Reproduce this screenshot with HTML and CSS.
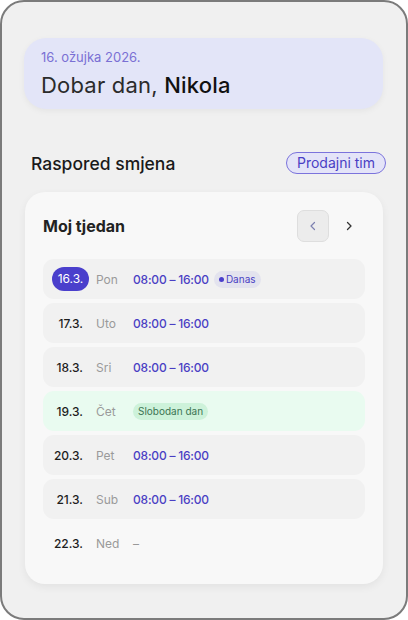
FILE: index.html
```html
<!doctype html>
<html lang="hr">

<head>
  <meta charset="UTF-8">
  <title>Raspored smjena</title>
  <link rel="stylesheet" href="styles.css">
</head>

<body>
  <div class="frame">
    <!-- Greeting -->
    <div class="greeting">
      <div class="greeting-date">16. ožujka 2026.</div>
      <div class="greeting-hello">Dobar dan, <span class="name">Nikola</span></div>
    </div>

    <!-- Section header -->
    <div class="section-head">
      <h2 class="section-title">Raspored smjena</h2>
      <span class="team">Prodajni tim</span>
    </div>

    <!-- Week card -->
    <div class="week">
      <div class="week-head">
        <h3 class="week-title">Moj tjedan</h3>
        <div class="week-nav">
          <button class="nav-btn active" aria-label="Prethodni tjedan">
            <svg width="12" height="12" viewBox="0 0 12 12"><path d="M7.5 2.5 4 6l3.5 3.5" fill="none" stroke="#7d80b0" stroke-width="1.2" stroke-linecap="round" stroke-linejoin="round"/></svg>
          </button>
          <button class="nav-btn" aria-label="Sljedeći tjedan">
            <svg width="12" height="12" viewBox="0 0 12 12"><path d="M4.5 2.5 8 6l-3.5 3.5" fill="none" stroke="#333" stroke-width="1.3" stroke-linecap="round" stroke-linejoin="round"/></svg>
          </button>
        </div>
      </div>

      <div class="days">
        <div class="day">
          <span class="day-date today">16.3.</span>
          <span class="day-name">Pon</span>
          <span class="day-time">08:00 – 16:00</span>
          <span class="tag tag-today"><i class="dot"></i>Danas</span>
        </div>
        <div class="day">
          <span class="day-date">17.3.</span>
          <span class="day-name">Uto</span>
          <span class="day-time">08:00 – 16:00</span>
        </div>
        <div class="day">
          <span class="day-date">18.3.</span>
          <span class="day-name">Sri</span>
          <span class="day-time">08:00 – 16:00</span>
        </div>
        <div class="day day-off">
          <span class="day-date">19.3.</span>
          <span class="day-name">Čet</span>
          <span class="tag tag-off">Slobodan dan</span>
        </div>
        <div class="day">
          <span class="day-date">20.3.</span>
          <span class="day-name">Pet</span>
          <span class="day-time">08:00 – 16:00</span>
        </div>
        <div class="day">
          <span class="day-date">21.3.</span>
          <span class="day-name">Sub</span>
          <span class="day-time">08:00 – 16:00</span>
        </div>
        <div class="day day-empty">
          <span class="day-date">22.3.</span>
          <span class="day-name">Ned</span>
          <span class="day-none">–</span>
        </div>
      </div>
    </div>
  </div>
</body>

</html>
```

FILE: styles.css
```css
html,
body {
  margin: 0;
  background: #fff;
}

body {
  font-family: Inter, "Noto Sans", sans-serif;
  color: #222;
}

.frame {
  box-sizing: border-box;
  width: 408px;
  height: 620px;
  border: 2px solid #7b7b7b;
  border-radius: 24px;
  background: #f0f0f0;
  padding: 36px 23px 0 22px;
}

/* Greeting */

.greeting {
  background: #e3e5f8;
  border-radius: 22px;
  padding: 11px 17px 10px;
  box-shadow: 0 2px 6px rgba(0, 0, 0, 0.05);
}

.greeting-date {
  font-size: 13px;
  line-height: 17px;
  color: #7a70d4;
}

.greeting-hello {
  margin-top: 5px;
  font-size: 22px;
  line-height: 28px;
  letter-spacing: 0.2px;
  color: #2b2b2b;
}

.greeting-hello .name {
  color: #111;
  font-weight: 500;
}

/* Section header */

.section-head {
  display: flex;
  align-items: center;
  justify-content: space-between;
  margin: 43px -3px 18px 7px;
  height: 22px;
}

.section-title {
  margin: 0;
  font-size: 17.5px;
  font-weight: 500;
  color: #1a1a1a;
}

.team {
  border: 1px solid #7b73dc;
  background: #e4e4f8;
  color: #4a3fc4;
  font-size: 14px;
  line-height: 20px;
  padding: 0 10px;
  border-radius: 11px;
}

/* Week card */

.week {
  background: #f8f8f8;
  border-radius: 20px;
  padding: 18px 18px 21px;
  margin-left: 1px;
  box-shadow: 0 3px 8px rgba(0, 0, 0, 0.06);
}

.week-head {
  display: flex;
  align-items: center;
  justify-content: space-between;
  margin-bottom: 17px;
}

.week-title {
  margin: 0;
  font-size: 16px;
  font-weight: 700;
  color: #222;
}

.week-nav {
  display: flex;
  gap: 4px;
}

.nav-btn {
  width: 32px;
  height: 32px;
  display: flex;
  align-items: center;
  justify-content: center;
  border: 1px solid transparent;
  border-radius: 7px;
  background: none;
  padding: 0;
}

.nav-btn.active {
  background: #ececec;
  border-color: #dedede;
}

.days {
  display: flex;
  flex-direction: column;
  gap: 4px;
}

.day {
  display: flex;
  align-items: center;
  height: 40px;
  padding-left: 9px;
  background: #f1f1f1;
  border-radius: 11px;
  font-size: 12px;
}

.day-off {
  background: #e9fbf0;
}

.day-empty {
  background: none;
}

.day-date {
  box-sizing: border-box;
  width: 37px;
  padding-right: 6px;
  text-align: right;
  font-weight: 500;
  color: #1e1e1e;
}

.day-date.today {
  background: #4a3fcc;
  color: #fff;
  height: 24px;
  line-height: 24px;
  border-radius: 12px;
  padding: 0;
  text-align: center;
  font-weight: 400;
}

.day-name {
  width: 30px;
  margin-left: 7px;
  color: #9a9a9a;
}

.day-time {
  margin-left: 7px;
  color: #4a3fc4;
  font-weight: 500;
  letter-spacing: -0.2px;
}

.day-none {
  margin-left: 7px;
  color: #999;
}

.tag {
  display: inline-flex;
  align-items: center;
  height: 17px;
  border-radius: 9px;
  font-size: 10px;
}

.tag-today {
  margin-left: 5px;
  padding: 0 5px 0 5px;
  background: #e3e3ee;
  color: #4a3fc4;
  gap: 2px;
}

.dot {
  width: 5px;
  height: 5px;
  border-radius: 50%;
  background: #4a3fcc;
}

.tag-off {
  margin-left: 7px;
  padding: 0 5px;
  background: #cdf2da;
  color: #3c7453;
}
```
